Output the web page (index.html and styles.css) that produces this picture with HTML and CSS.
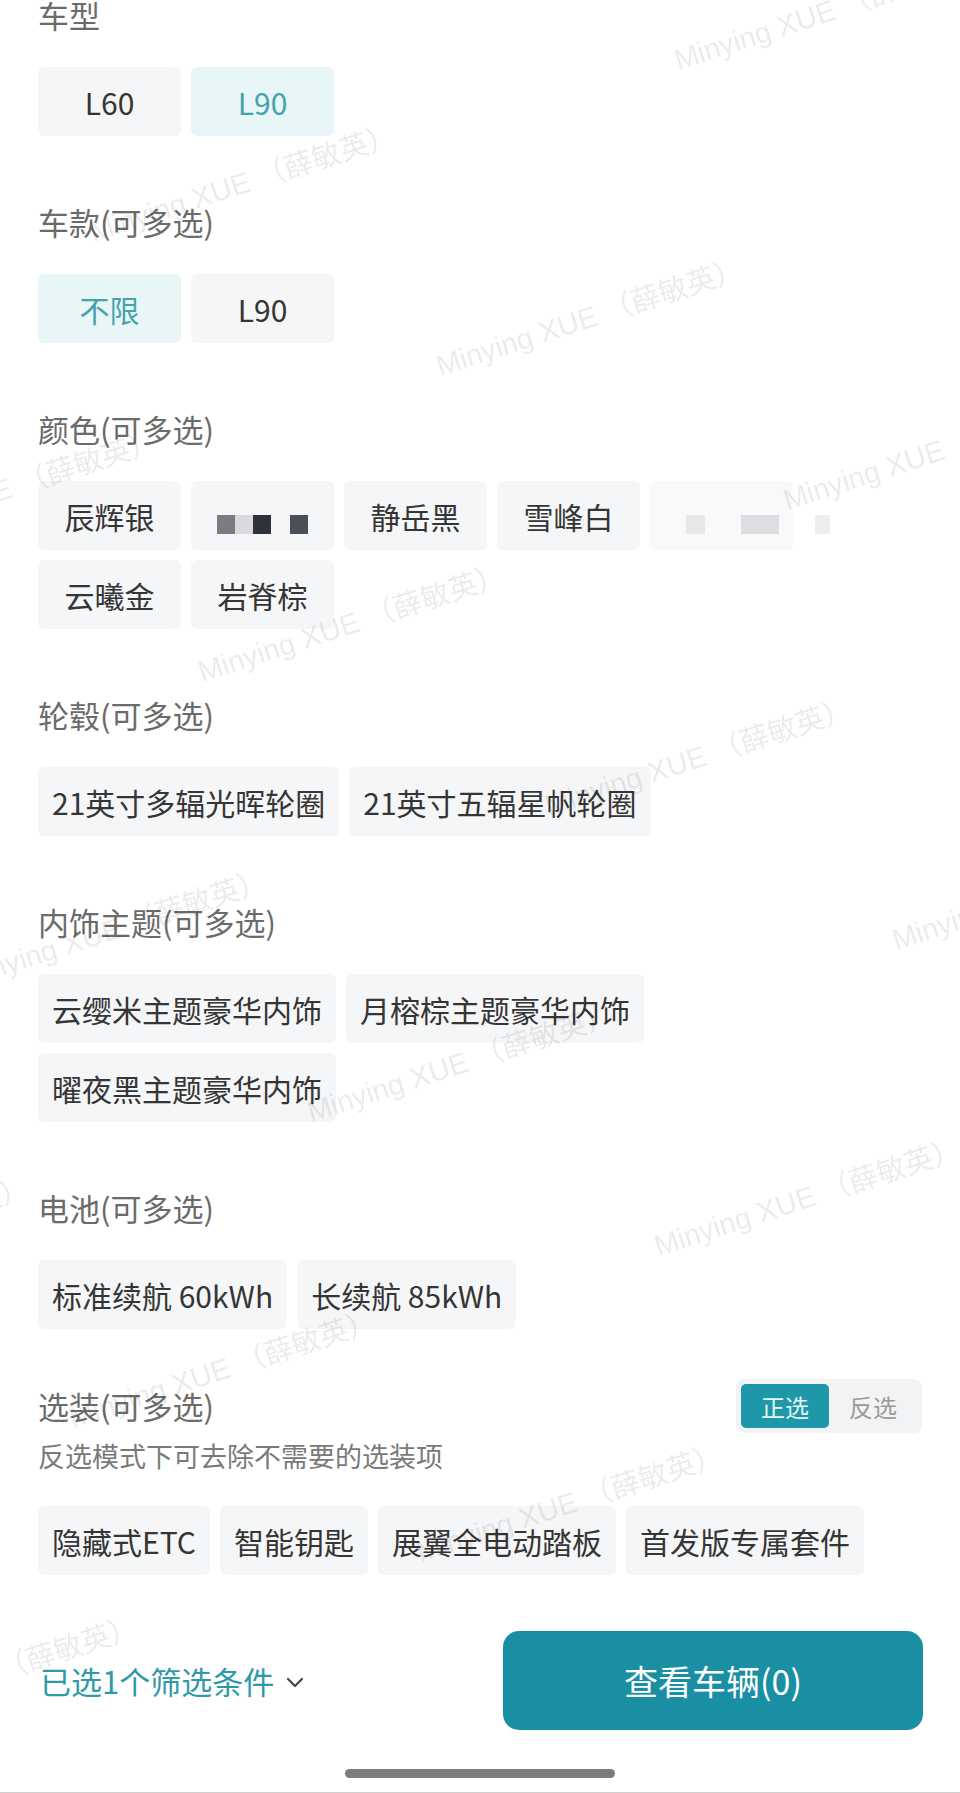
FILE: index.html
```html
<!DOCTYPE html>
<html lang="zh-CN">
<head>
<meta charset="utf-8">
<title>筛选</title>
<link rel="stylesheet" href="styles.css">
</head>
<body>
<div class="page">
  <section class="section first">
    <div class="label">车型</div>
    <div class="chips">
      <span class="chip">L60</span>
      <span class="chip active">L90</span>
    </div>
  </section>

  <section class="section">
    <div class="label">车款(可多选)</div>
    <div class="chips">
      <span class="chip active">不限</span>
      <span class="chip">L90</span>
    </div>
  </section>

  <section class="section">
    <div class="label">颜色(可多选)</div>
    <div class="chips">
      <span class="chip">辰辉银</span>
      <span class="chip">
        <span class="mosaic">
          <i class="blk b-grey"></i><i class="blk b-light"></i><i class="blk b-dark"></i><i class="blk b-gap"></i><i class="blk b-slate"></i>
        </span>
      </span>
      <span class="chip">静岳黑</span>
      <span class="chip">雪峰白</span>
      <span class="chip pale">
        <span class="mosaic faint">
          <i class="blk f1"></i><i class="blk f2"></i><i class="blk f3"></i>
        </span>
      </span>
      <span class="chip">云曦金</span>
      <span class="chip">岩脊棕</span>
    </div>
  </section>

  <section class="section">
    <div class="label">轮毂(可多选)</div>
    <div class="chips">
      <span class="chip">21英寸多辐光晖轮圈</span>
      <span class="chip">21英寸五辐星帆轮圈</span>
    </div>
  </section>

  <section class="section">
    <div class="label">内饰主题(可多选)</div>
    <div class="chips">
      <span class="chip">云缨米主题豪华内饰</span>
      <span class="chip">月榕棕主题豪华内饰</span>
      <span class="chip">曜夜黑主题豪华内饰</span>
    </div>
  </section>

  <section class="section">
    <div class="label">电池(可多选)</div>
    <div class="chips">
      <span class="chip">标准续航 60kWh</span>
      <span class="chip">长续航 85kWh</span>
    </div>
  </section>

  <section class="section options">
    <div class="opt-head">
      <div class="label">选装(可多选)</div>
      <div class="toggle">
        <span class="seg on">正选</span>
        <span class="seg">反选</span>
      </div>
    </div>
    <div class="hint">反选模式下可去除不需要的选装项</div>
    <div class="chips">
      <span class="chip">隐藏式ETC</span>
      <span class="chip">智能钥匙</span>
      <span class="chip">展翼全电动踏板</span>
      <span class="chip">首发版专属套件</span>
    </div>
  </section>

  <footer class="footer">
    <div class="summary">
      <span>已选1个筛选条件</span>
      <svg class="chev" width="18" height="11" viewBox="0 0 18 11"><path d="M2 2 L9 9 L16 2" fill="none" stroke="#444444" stroke-width="2.2" stroke-linecap="round" stroke-linejoin="round"/></svg>
    </div>
    <button class="cta">查看车辆(0)</button>
  </footer>

  <div class="home"><span class="bar"></span></div>
</div>

<div class="watermarks">
  <span class="wm w1">Minying XUE （薛敏英）</span>
  <span class="wm w2">Minying XUE （薛敏英）</span>
  <span class="wm w3">Minying XUE （薛敏英）</span>
  <span class="wm w4">Minying XUE （薛敏英）</span>
  <span class="wm w5">Minying XUE （薛敏英）</span>
  <span class="wm w6">Minying XUE （薛敏英）</span>
  <span class="wm w7">Minying XUE （薛敏英）</span>
  <span class="wm w8">Minying XUE （薛敏英）</span>
  <span class="wm w9">Minying XUE （薛敏英）</span>
  <span class="wm w10">Minying XUE （薛敏英）</span>
  <span class="wm w11">Minying XUE （薛敏英）</span>
  <span class="wm w12">Minying XUE （薛敏英）</span>
  <span class="wm w13">Minying XUE （薛敏英）</span>
  <span class="wm w14">Minying XUE （薛敏英）</span>
  <span class="wm w15">Minying XUE （薛敏英）</span>
</div>
</body>
</html>
```

FILE: styles.css
```css
html, body {
  margin: 0;
  padding: 0;
  background: #ffffff;
  overflow: hidden;
}

body {
  font-family: "Noto Sans CJK SC", "Noto Sans", "Liberation Sans", sans-serif;
  color: #333333;
}

.page {
  padding: 0 38px;
}

.section {
  margin-top: 66px;
}

.section.first {
  margin-top: -5px;
}

.label {
  font-size: 31px;
  line-height: 40px;
  color: #6b6b6b;
}

.chips {
  display: flex;
  flex-wrap: wrap;
  gap: 10px;
  margin-top: 32px;
}

.chip {
  box-sizing: border-box;
  display: inline-flex;
  align-items: center;
  justify-content: center;
  height: 69px;
  min-width: 143px;
  padding: 0 14px;
  background: #f5f6f7;
  border-radius: 6px;
  font-size: 30px;
  line-height: 1;
  color: #353535;
  white-space: nowrap;
}

.chip.active {
  background: #e8f6f7;
  color: #45a3ab;
}

.chip.pale {
  background: #f8faf9;
}

.mosaic {
  display: flex;
  margin-top: 18px;
}

.blk {
  display: block;
  width: 18px;
  height: 19px;
}

.b-grey { background: #7b7b80; }
.b-light { background: #dadade; }
.b-dark { background: #2f323a; }
.b-gap { background: transparent; width: 19px; }
.b-slate { background: #4a4e57; }

.mosaic.faint {
  margin-left: 2px;
}

.f1 { background: #e7e7ea; width: 19px; }
.f2 { background: #dedee2; width: 38px; margin-left: 36px; }
.f3 { background: #eeeef0; width: 15px; margin-left: 36px; margin-right: -70px; }

.options {
  margin-top: 50px;
}

.opt-head {
  display: flex;
  justify-content: space-between;
  align-items: center;
  height: 54px;
}

.toggle {
  display: flex;
  padding: 5px;
  background: #f2f3f4;
  border-radius: 8px;
}

.seg {
  width: 88px;
  height: 44px;
  display: flex;
  align-items: center;
  justify-content: center;
  font-size: 24px;
  color: #9a9a9a;
  border-radius: 5px;
}

.seg.on {
  background: #1e97a8;
  color: #e3f7f7;
}

.hint {
  margin-top: 5px;
  font-size: 27px;
  line-height: 36px;
  color: #7a7a7a;
}

.footer {
  margin-top: 56px;
  display: flex;
  justify-content: space-between;
  align-items: center;
}

.summary {
  display: flex;
  align-items: center;
  gap: 12px;
  font-size: 31px;
  color: #2f9aa7;
  padding-left: 2px;
}

.chev {
  margin-top: 3px;
}

.cta {
  width: 420px;
  height: 99px;
  margin-right: -1px;
  border: none;
  border-radius: 16px;
  background: #1a8fa3;
  color: #ffffff;
  font-family: "Noto Sans CJK SC", "Noto Sans", sans-serif;
  font-size: 34px;
  padding: 0;
}

.home {
  margin: 39px -38px 0;
  padding-bottom: 14px;
  display: flex;
  justify-content: center;
  border-bottom: 2px solid #d0d0d0;
}

.bar {
  display: block;
  width: 270px;
  height: 9px;
  border-radius: 5px;
  background: #7c7c7c;
}

.watermarks {
  position: fixed;
  inset: 0;
  overflow: hidden;
  pointer-events: none;
  z-index: 5;
}

.wm {
  position: absolute;
  white-space: nowrap;
  font-family: "Liberation Sans", "Noto Sans CJK SC", sans-serif;
  font-size: 29px;
  line-height: 32px;
  color: rgba(0, 0, 0, 0.08);
  transform: rotate(-18deg);
  transform-origin: 0 100%;
}

.w1 { left: 680px; top: 44px; }
.w2 { left: 95px; top: 216px; }
.w3 { left: -143px; top: 522px; }
.w4 { left: 442px; top: 350px; }
.w5 { left: 204px; top: 656px; }
.w6 { left: -34px; top: 962px; }
.w7 { left: -272px; top: 1268px; }
.w8 { left: 789px; top: 484px; }
.w9 { left: 551px; top: 790px; }
.w10 { left: 313px; top: 1096px; }
.w11 { left: 75px; top: 1402px; }
.w12 { left: -163px; top: 1708px; }
.w13 { left: 898px; top: 924px; }
.w14 { left: 660px; top: 1230px; }
.w15 { left: 422px; top: 1536px; }
```
